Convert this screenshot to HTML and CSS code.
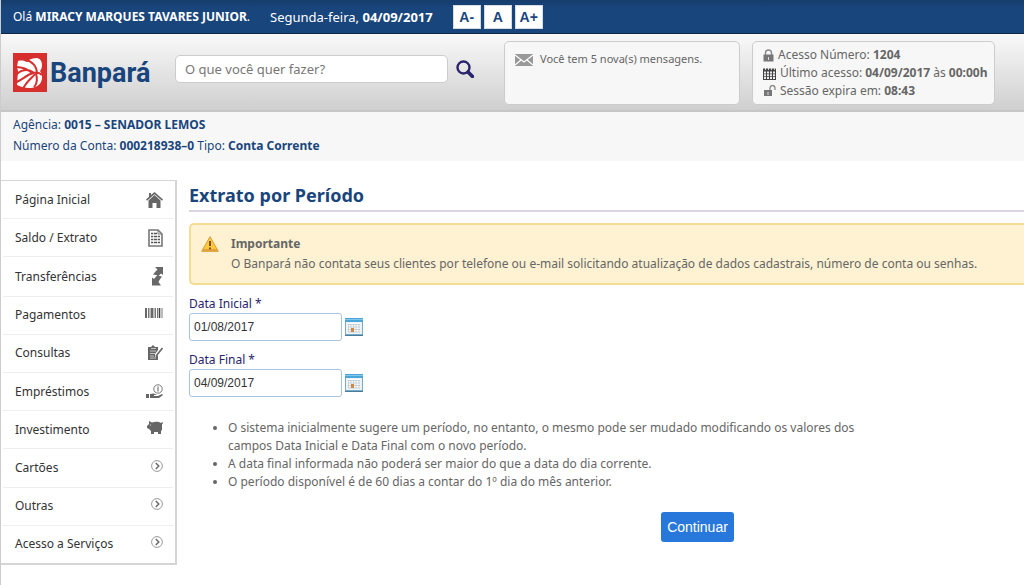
FILE: index.html
```html
<!DOCTYPE html>
<html lang="pt-BR">
<head>
<meta charset="utf-8">
<meta name="viewport" content="width=device-width, initial-scale=1">
<title>Banpará - Extrato por Período</title>
<link rel="stylesheet" href="styles.css">
</head>
<body>
<svg class="sprite" aria-hidden="true">
  <symbol id="go" viewBox="0 0 12 12"><circle cx="6" cy="6" r="5.4" fill="none" stroke="#999" stroke-width="1"/><path d="M4.8 3l3 3-3 3" fill="none" stroke="#666" stroke-width="1.4"/></symbol>
  <symbol id="calendar" viewBox="0 0 18 18"><path d="M0 1h18v16H0z" fill="#79a9c4"/><path d="M0 0h18v4H0z" fill="#4ba6d8"/><path d="M0 1h18v1H0z" fill="#83c8ea"/><path d="M1 4h16v12H1z" fill="#edf4f8"/><path d="M3 5h12v9H3z" fill="#fff"/><path d="M3 6.5h12M3 9h12M3 11.500h12M3 14h12M3.500 6v8M6 6v8M8.500 6v8M11 6v8M14 6v8" stroke="#b8c2c9" stroke-width=".7"/><path d="M6 10h3v4H6z" fill="#cf8a45"/><path d="M0 17h18v1H0z" fill="#487d9e"/></symbol>
</svg>
<div class="topbar">
  <span>Olá <strong>MIRACY MARQUES TAVARES JUNIOR</strong>.</span>
  <span class="today">Segunda-feira, <strong>04/09/2017</strong></span>
  <div class="zoom"><button type="button">A-</button><button type="button">A</button><button type="button">A+</button></div>
</div>
<header class="header">
  <a class="logo" href="#" aria-label="Banpará">
    <svg width="34" height="39" viewBox="0 0 34 39" aria-hidden="true"><path fill="#d72f2e" d="M0 0h34v39H0z"/><path fill="#fff" d="M5 8c4-1 7 0 9 1 2-3 6-4 10-4 4 1 5 4 5 7s-1 5-2 6c2 3 3 7 1 11-2 4-7 6-12 6-4 0-8-1-12-3l1-14-1-4z"/><path d="M3 14c8 0 13 3 17 7M12 7c7 1 12 6 12 14M3 22c4-5 12-7 18-2M3 29c5-1 10-7 17-9 4-1 7 0 9 2M10 36c3-7 8-10 12-15M21 34c4-4 3-9 2-14" fill="none" stroke="#d72f2e" stroke-width="2"/></svg>
    <span>Banpará</span>
  </a>
  <form class="search">
    <input type="text" aria-label="Busca" placeholder="O que você quer fazer?">
    <button type="button" aria-label="Buscar"><svg width="18" height="18" viewBox="0 0 18 18" fill="none" stroke="#29246b"><circle cx="7.500" cy="7.500" r="6" stroke-width="2.400"/><path d="M12 12l4.500 4.500" stroke-width="3.600" stroke-linecap="round"/></svg></button>
  </form>
  <section class="panel messages">
    <svg width="18" height="12" viewBox="0 0 18 12"><path fill="#999" d="M0 0h18v12H0z"/><path d="M0 1l9 7 9-7M0 11l6-5M18 11l-6-5" fill="none" stroke="#fff" stroke-width="1.200"/></svg>
    <span>Você tem 5 nova(s) mensagens.</span>
  </section>
  <section class="panel session">
    <div><svg width="11" height="13" viewBox="0 0 11 13"><path d="M2.500 6V4a3 3 0 016 0v2" fill="none" stroke="#888" stroke-width="1.400"/><path fill="#777" d="M.5 5.500h10v7H.5z"/><path fill="#ddd" d="M5 8h1v3H5z"/></svg><span>Acesso Número: <strong>1204</strong></span></div>
    <div><svg width="13" height="13" viewBox="0 0 13 13"><path fill="#444" d="M0 1.500h13V13H0z"/><path stroke="#f7f7f7" stroke-width=".8" d="M2.500 0v3M5.500 0v3M8.500 0v3M11.500 0v3"/><path fill="#eee" d="M1 4.500h2v2H1zM4 4.500h2v2H4zM7 4.500h2v2H7zM10 4.500h2v2h-2zM1 7.200h2v2H1zM4 7.200h2v2H4zM7 7.200h2v2H7zM10 7.200h2v2h-2zM1 10h2v2H1zM4 10h2v2H4zM7 10h2v2H7zM10 10h2v2h-2z"/></svg><span>Último acesso: <strong>04/09/2017</strong> às <strong>00:00h</strong></span></div>
    <div><svg width="13" height="12" viewBox="0 0 13 12"><path d="M7 6V3a2.500 2.500 0 015 0v2" fill="none" stroke="#888" stroke-width="1.300"/><path fill="#777" d="M1 5h8v6H1z"/><path fill="#ddd" d="M4.500 7h1v3h-1z"/></svg><span>Sessão expira em: <strong>08:43</strong></span></div>
  </section>
</header>
<section class="account">
  <div>Agência: <strong>0015 – SENADOR LEMOS</strong></div>
  <div>Número da Conta: <strong>000218938–0</strong> Tipo: <strong>Conta Corrente</strong></div>
</section>
<div class="layout">
  <nav aria-label="Menu principal">
    <ul class="menu">
      <li><a href="#">Página Inicial<svg width="17" height="16" viewBox="0 0 17 16" fill="#666"><path d="M8.500 0L17 7.500l-1 1.200L8.500 2.300 1 8.700 0 7.500 3 4.800V1h2v2z"/><path d="M2.500 8.500l6-5.500 6 5.500V16h-4v-5h-4v5h-4z"/></svg></a></li>
      <li><a href="#">Saldo / Extrato<svg width="15" height="18" viewBox="0 0 15 18"><path d="M1 1h9l4 4v12H1z" fill="#fff" stroke="#777" stroke-width="1.600"/><path d="M10 1v4h4" fill="none" stroke="#777"/><path d="M3 4.500h6M3 7.500h9M3 10.500h9M3 13.500h9" stroke="#555" stroke-width="1.700"/><path d="M5.500 3v12M9.500 6v9" stroke="#fff" stroke-width=".7"/></svg></a></li>
      <li><a href="#">Transferências<svg width="11" height="19" viewBox="0 0 11 19" fill="#686868"><path d="M3 0h8v8L9 6.500 6 9.500 4.500 8 1 7.500 3.500 4.500 5.500 2.500z"/><path d="M0 10.500l2 1.500L5 8.500l5 1L7.500 13 6.500 15l2.500 3.500H0z"/></svg></a></li>
      <li><a href="#">Pagamentos<svg class="up" width="18" height="10" viewBox="0 0 18 10"><path d="M1 0v10M7 0v10M14.500 0v10" stroke="#444" stroke-width="1.600"/><path d="M3.500 0v10M5 0v10M9 0v10M10.500 0v10M12.500 0v10M17 0v10" stroke="#777" stroke-width="1"/></svg></a></li>
      <li><a href="#">Consultas<svg width="16" height="16" viewBox="0 0 16 16"><path fill="#666" d="M1 2h3l2-2 2 2h3v3l-3 4v3l3-2v5H1z"/><path d="M3 6h6M3 8.500h5M3 11h4M3 13h6M4 3.500h5" stroke="#ddd" stroke-width=".8"/><path d="M15.500 3L9 11" stroke="#666" stroke-width="1.600"/></svg></a></li>
      <li><a href="#">Empréstimos<svg width="17" height="16" viewBox="0 0 17 16"><circle cx="12" cy="5" r="4.200" fill="none" stroke="#777"/><path d="M12 2.500v5" stroke="#777" stroke-width="1.200"/><path fill="#666" d="M0 10h3v4H0zM4 10l4-.5 3 1.500h-3v1h4l4-2 1 1-4 3H4z"/></svg></a></li>
      <li><a href="#">Investimento<svg class="up" width="16" height="13" viewBox="0 0 16 13"><path fill="#666" d="M0 5l2-2V0l3 1.500C8 .3 12 .5 14 2l1.500-1 .5 1-1 1.500V9l-1 1v3h-3v-2H7v2H4v-3L2 8 0 7z"/><path d="M3 4h1" stroke="#ddd"/></svg></a></li>
      <li><a href="#">Cartões<svg class="up" width="12" height="12"><use href="#go"/></svg></a></li>
      <li><a href="#">Outras<svg class="up" width="12" height="12"><use href="#go"/></svg></a></li>
      <li><a href="#">Acesso a Serviços<svg class="up" width="12" height="12"><use href="#go"/></svg></a></li>
    </ul>
  </nav>
  <main>
    <h1>Extrato por Período</h1>
    <section class="notice">
      <svg width="18" height="16" viewBox="0 0 18 16"><path d="M9 .7l8.300 14.600H.7z" fill="#fbc93c" stroke="#d99c38" stroke-linejoin="round"/><path d="M2 13h14l1 2H1z" fill="#e3a33b"/><path d="M9 5v5M9 11.500v1.700" stroke="#70442a" stroke-width="1.800"/></svg>
      <div><strong>Importante</strong><p>O Banpará não contata seus clientes por telefone ou e-mail solicitando atualização de dados cadastrais, número de conta ou senhas.</p></div>
    </section>
    <form class="period">
      <label for="start">Data Inicial *</label>
      <div class="field"><input id="start" type="text" value="01/08/2017"><button type="button" aria-label="Escolher data inicial"><svg width="18" height="18"><use href="#calendar"/></svg></button></div>
      <label for="end">Data Final *</label>
      <div class="field"><input id="end" type="text" value="04/09/2017"><button type="button" aria-label="Escolher data final"><svg width="18" height="18"><use href="#calendar"/></svg></button></div>
      <ul class="hints">
        <li>O sistema inicialmente sugere um período, no entanto, o mesmo pode ser mudado modificando os valores dos campos Data Inicial e Data Final com o novo período.</li>
        <li>A data final informada não poderá ser maior do que a data do dia corrente.</li>
        <li>O período disponível é de 60 dias a contar do 1º dia do mês anterior.</li>
      </ul>
      <div class="actions"><button type="button">Continuar</button></div>
    </form>
  </main>
</div>
</body>
</html>
```
FILE: styles.css
```css
* { box-sizing: border-box; }
body {
  margin: 0;
  min-height: 100vh;
  border-left: 1px solid #ccc;
  background: #fff;
  color: #666;
  font: 12px/18px "Noto Sans", "Open Sans", sans-serif;
}
svg { display: block; flex-shrink: 0; }
.sprite { position: absolute; width: 0; height: 0; }
button { padding: 0; border: 0; background: none; cursor: pointer; }
.topbar {
  display: flex;
  align-items: center;
  gap: 20px;
  height: 34px;
  padding-left: 12px;
  border-bottom: 1px solid #0f2848;
  background: linear-gradient(#153d6c, #19457d 8px);
  color: #fff;
}
.today { font-size: 13px; }
.zoom { display: flex; gap: 3px; }
.zoom button {
  width: 28px;
  height: 24px;
  border: 1px solid #d5dce5;
  background: #fff;
  color: #19457d;
  font: bold 14px "Liberation Sans", sans-serif;
}
.header {
  display: flex;
  align-items: flex-start;
  height: 78px;
  padding: 7px 28px 0 12px;
  border-bottom: 2px solid #c6c6c6;
  background: linear-gradient(#f9f9f9, #cfcfcf);
}
.logo {
  display: flex;
  align-items: center;
  gap: 3px;
  width: 162px;
  padding-top: 12px;
  color: #19457d;
  text-decoration: none;
  font: bold 27px/36px Roboto, sans-serif;
}
.search { display: flex; align-items: center; gap: 8px; padding-top: 14px; }
.search input {
  width: 273px;
  height: 28px;
  padding: 0 9px;
  border: 1px solid #ccc;
  border-radius: 5px;
  background: #fff;
  font: 13px "Noto Sans", sans-serif;
}
.search input::placeholder { color: #777; opacity: 1; }
.panel {
  height: 64px;
  border: 1px solid #cacccf;
  border-radius: 5px;
  background: #f7f7f7;
}
.messages { display: flex; gap: 7px; width: 236px; margin-left: 30px; padding: 8px 10px; font-size: 11px; }
.messages svg { margin-top: 4px; }
.session { width: 243px; margin-left: 12px; padding: 4px 10px; }
.session div { display: flex; align-items: center; gap: 4px; height: 18px; white-space: nowrap; }
.account {
  height: 49px;
  padding: 2px 12px;
  background: #f7f7f7;
  color: #19457d;
  line-height: 21px;
}
.layout { display: grid; grid-template-columns: 176px minmax(0, 1fr); column-gap: 12px; padding-top: 19px; }
.menu {
  display: flex;
  flex-direction: column;
  min-height: 385px;
  margin: 0;
  padding: 0;
  border: 2px solid #d5d5d5;
  border-top-width: 1px;
  border-left: 0;
  list-style: none;
}
.menu li { display: flex; flex: 1; margin: 0 2px; border-bottom: 1px solid #eee; }
.menu li:last-child { border-bottom: 0; }
.menu a {
  display: flex;
  flex: 1;
  align-items: center;
  justify-content: space-between;
  padding: 0 10px 0 12px;
  color: #333;
  text-decoration: none;
}
.menu .up { margin-bottom: 5px; }
main { padding-top: 4px; }
h1 {
  margin: 0 0 11px;
  padding-bottom: 3px;
  border-bottom: 2px solid #ddd3e7;
  color: #19457d;
  font: bold 18px/23px "Noto Sans", sans-serif;
}
.notice {
  display: flex;
  gap: 12px;
  padding: 9px 10px;
  border: 2px solid #f5dc94;
  border-right: 0;
  border-radius: 5px 0 0 5px;
  background: #fef2d2;
  line-height: 20px;
}
.notice svg { margin-top: 2px; }
.notice p { margin: 0; white-space: nowrap; }
.period { padding-top: 10px; }
.period label { display: block; color: #29246b; }
.field { display: flex; align-items: center; gap: 3px; margin-bottom: 10px; }
.field input {
  width: 153px;
  height: 28px;
  padding: 0 4px;
  border: 1px solid #a9c4de;
  border-radius: 3px;
  background: #fff;
  color: #333;
  font: 12px "Liberation Sans", sans-serif;
}
.hints { max-width: 690px; margin: 22px 0 0; padding-left: 39px; }
.actions { display: flex; justify-content: flex-end; max-width: 545px; margin-top: 21px; }
.actions button {
  width: 73px;
  height: 30px;
  border-radius: 3px;
  background: #2878dc;
  color: #fff;
  font: 14px "Liberation Sans", sans-serif;
}
```
